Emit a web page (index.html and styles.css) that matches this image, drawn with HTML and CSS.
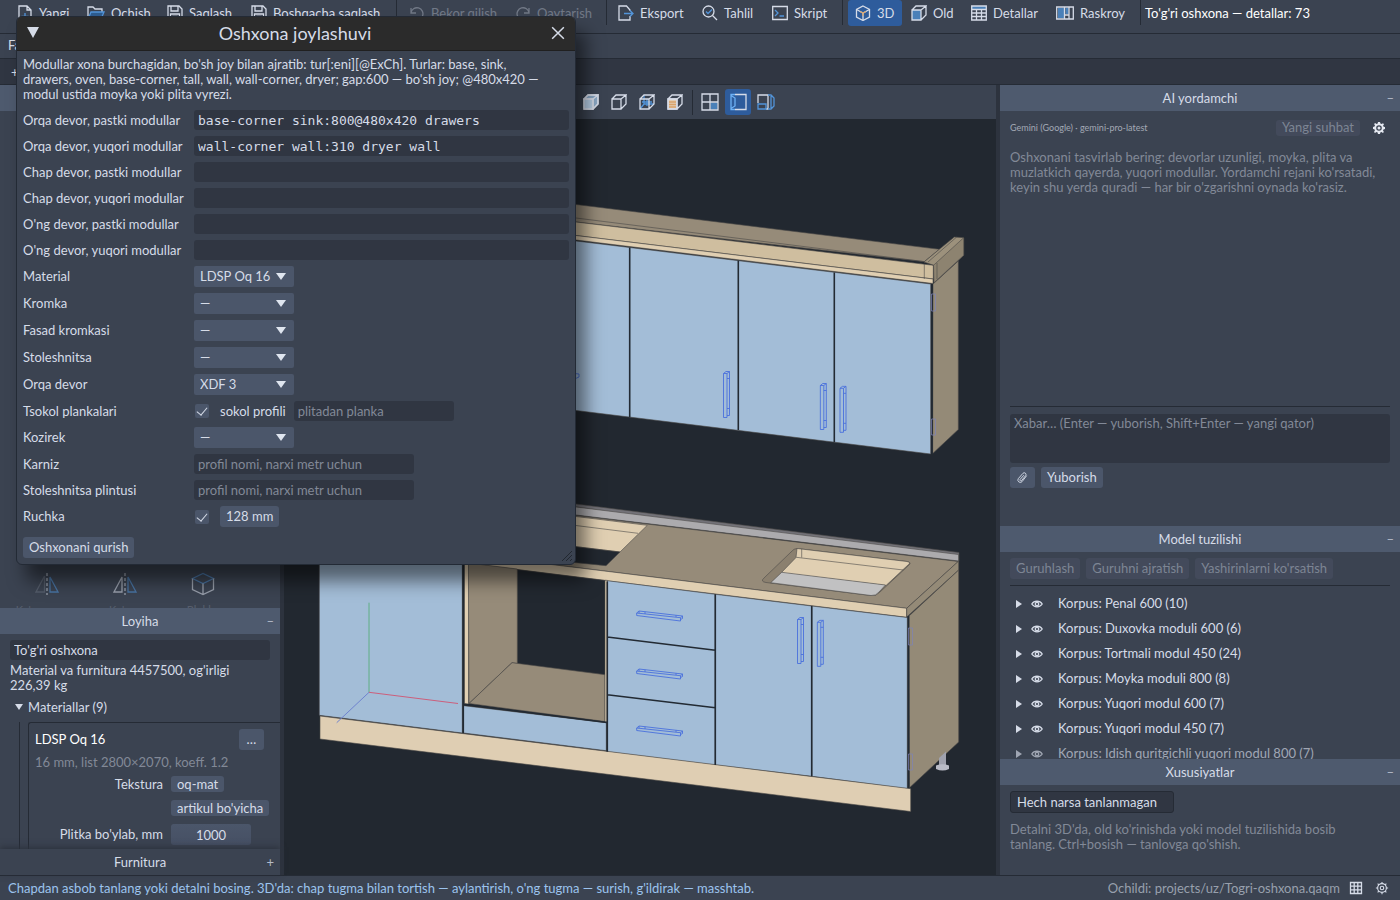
FILE: index.html
```html
<!DOCTYPE html>
<html lang="uz">
<head>
<meta charset="utf-8">
<title>To'g'ri oshxona</title>
<link rel="stylesheet" href="styles.css">
</head>
<body>
<svg class="defs" width="0" height="0" aria-hidden="true">
  <defs>
    <symbol id="i-save" viewBox="0 0 16 16"><path d="M1 1h11l3 3v11H1zM4 1v5h7V1M3.500 15V9h9v6M5.500 11.500h5"/></symbol>
    <symbol id="i-gear" viewBox="0 0 16 16"><circle cx="8" cy="8" r="5"/><circle cx="8" cy="8" r="2"/><path d="M8 1v2M8 13v2M1 8h2M13 8h2M3 3l1.500 1.500M11.500 11.500L13 13M13 3l-1.500 1.500M4.500 11.500L3 13"/></symbol>
    <symbol id="i-eye" viewBox="0 0 12 10"><path d="M.8 5C3 1.300 9 1.300 11.200 5 9 8.700 3 8.700.8 5z"/><circle cx="6" cy="5" r="1.700"/></symbol>
    <symbol id="h-flat" viewBox="0 0 48 12"><path d="M.7 3V5.500L44.500 11V7.700zM.7 3L3 1 46.500 6 44.500 7.700M46.500 6V8.500L44.500 9.500M3 1V3.300M9 1.800V4M40 5.300V7"/></symbol>
    <symbol id="h-tall" viewBox="0 0 8 48"><path d="M1 3H4.500V47H1zM3.500 1H7V45H4.500M1 3L3.500 1M4.500 3L7 1M4.500 8H7M4.500 38H7"/></symbol>
  </defs>
</svg>
<div class="app">
  <header class="toolbar">
    <button class="tool"><svg class="ic" viewBox="0 0 16 16"><path d="M4 15H2V1h8l4 4v10h-2M10 1v4h4"/><path class="b" d="M8 8v7M4.500 11.500h7"/></svg>Yangi</button>
    <button class="tool"><svg class="ic wide" viewBox="0 0 18 16"><path d="M1 14V2h5l2 2h7v3"/><path class="bf" d="M4 7h13l-3 7H1z"/></svg>Ochish</button>
    <button class="tool"><svg class="ic"><use href="#i-save"/></svg>Saqlash</button>
    <button class="tool"><svg class="ic"><use href="#i-save"/></svg>Boshqacha saqlash</button>
    <i class="sep"></i>
    <button class="tool" disabled><svg class="ic" viewBox="0 0 16 16"><path d="M2 3v5h5M2 8a6 6 0 1 1 3 6"/></svg>Bekor qilish</button>
    <button class="tool" disabled><svg class="ic" viewBox="0 0 16 16"><path d="M14 3v5H9M14 8a6 6 0 1 0-3 6"/></svg>Qaytarish</button>
    <i class="sep"></i>
    <button class="tool"><svg class="ic" viewBox="0 0 16 16"><path d="M12 6V5L8.500 1H1v14h11v-4"/><path class="b" d="M6 8.500h9M12 5.500l3 3-3 3"/></svg>Eksport</button>
    <button class="tool"><svg class="ic" viewBox="0 0 16 16"><circle cx="6.500" cy="6.500" r="5.500"/><path d="M10.500 10.500L15 15"/><path class="b" d="M4 6.500l2 2 4-4"/></svg>Tahlil</button>
    <button class="tool"><svg class="ic" viewBox="0 0 16 16"><path d="M.7 1.500h14.600v13H.7z"/><path class="b" d="M3 5l3 3-3 3M7.500 11H12"/></svg>Skript</button>
    <i class="sep"></i>
    <button class="tool active"><svg class="ic" viewBox="0 0 16 16"><path d="M8 1l6.500 3.500v7.500L8 15.500 1.500 12V4.500zM8 8v7.500"/><path d="M1.500 4.500L8 8l6.500-3.500"/><path class="o" d="M5 6.500L8 8l3-1.500M8 8v3"/></svg>3D</button>
    <button class="tool"><svg class="ic" viewBox="0 0 16 16"><path class="bs" d="M1 5h9v10H1z"/><path d="M1 5h9v10H1zM1 5l4-4h10l-5 4M15 1v9l-5 5"/></svg>Old</button>
    <button class="tool"><svg class="ic" viewBox="0 0 16 16"><path class="bs" d="M1 1h14v3H1z"/><path d="M.7 1h14.600v14H.7zM.7 4.500h14.600M.7 8h14.600M.7 11.500h14.600M5.500 4v11M10.500 4v11"/></svg>Detallar</button>
    <button class="tool"><svg class="ic wide" viewBox="0 0 18 16"><path class="bs" d="M2 3h6v10H2zM9.500 3h3v6h-3z"/><path d="M.7 2h16.600v12H.7zM8.500 2v12M13 2v12M8.500 10H13"/></svg>Raskroy</button>
    <i class="sep"></i>
    <span class="doc-title">To'g'ri oshxona — detallar: 73</span>
  </header>
  <nav class="menubar"><button class="menu">Fayl</button></nav>
  <div class="tabs"><button class="menu" aria-label="Yangi varaq">+</button></div>

  <main class="work">
    <aside class="side left">
      <div class="head"></div>
      <div class="palette">
        <div class="tiles">
          <button class="tile"><svg viewBox="0 0 24 24"><path class="dim" d="M9.500 4v16H1z"/><path class="dash" d="M12 1v22"/><path class="b" d="M15 5v15h8z"/></svg><span>Ko'zgu nusxa</span></button>
          <button class="tile"><svg viewBox="0 0 24 24"><path d="M9 5v15H1z"/><path class="dash" d="M12 1v22"/><path class="b" d="M15 5v15h8z"/></svg><span>Ko'zgu</span></button>
          <button class="tile"><svg viewBox="0 0 24 24"><path class="b" d="M1.500 6.500L12 1.500l10.500 5L12 11.500z"/><path d="M1.500 6.500v11l10.500 5 10.500-5v-11M12 11.500v11"/></svg><span>Blokka</span></button>
        </div>
      </div>
      <div class="head">Loyiha<button class="fold" aria-label="Yig'ish">–</button></div>
      <div class="project">
        <input class="field" aria-label="Loyiha nomi" value="To'g'ri oshxona">
        <p>Material va furnitura 4457500, og'irligi 226,39 kg</p>
        <button class="expander"><i class="tri-down"></i>Materiallar (9)</button>
        <div class="nest">
          <section class="card">
            <div class="card-top"><strong>LDSP Oq 16</strong><button class="btn">…</button></div>
            <div class="muted">16 mm, list 2800×2070, koeff. 1.2</div>
            <div class="props">
              <span>Tekstura</span><button class="btn small">oq-mat</button>
              <span></span><button class="btn small">artikul bo'yicha</button>
              <label for="tile-len">Plitka bo'ylab, mm</label><input id="tile-len" class="num" value="1000">
            </div>
          </section>
        </div>
      </div>
      <div class="head closed">Furnitura<button class="fold" aria-label="Ochish">+</button></div>
    </aside>

    <section class="view">
      <div class="viewbar">
        <button class="vb" aria-label="Bo'yalgan"><svg viewBox="0 0 16 16"><path class="fill-soft" d="M1 5l4-4h10v9l-5 5H1z"/><path class="fill-light" d="M1 5h9v10H1z"/><path d="M1 5l4-4h10l-5 4zM15 1v9l-5 5V5"/></svg></button>
        <button class="vb" aria-label="Chiziqli"><svg viewBox="0 0 16 16"><path d="M1 5h9v10H1zM1 5l4-4h10l-5 4M15 1v9l-5 5"/></svg></button>
        <button class="vb" aria-label="Karkas"><svg viewBox="0 0 16 16"><path class="b" d="M5 1v9h10M5 10l-4 5M8 5v7M3 8h10"/><path d="M1 5h9v10H1zM1 5l4-4h10l-5 4M15 1v9l-5 5"/></svg></button>
        <button class="vb" aria-label="Tekstura"><svg viewBox="0 0 16 16"><path class="fill-tan" d="M1 5h9v10H1z"/><path class="o" d="M2 8h7M2 10.500h7M2 13h7"/><path d="M1 5h9v10H1zM1 5l4-4h10l-5 4M15 1v9l-5 5"/></svg></button>
        <i class="sep"></i>
        <button class="vb" aria-label="To'rt oyna"><svg class="big" viewBox="0 0 18 18"><path class="bs" d="M9.500 9.500h7v7h-7z"/><path d="M1 1h16v16H1zM9 1v16M1 9h16"/></svg></button>
        <button class="vb active" aria-label="Chap oyna"><svg class="big" viewBox="0 0 18 18"><path d="M6 1.500h11v15H6"/><path class="bl" d="M6 1.500H2v15h4M2 2.500l4 2.500v8l-4 2.500"/></svg></button>
        <button class="vb" aria-label="O'lcham"><svg class="big" viewBox="0 0 18 18"><path d="M1 10V2h10v14H9"/><path class="b" d="M1 11h8v5H1zM11 2h3l3 3v8l-3 3h-3M14 3v12"/></svg></button>
      </div>
      <svg class="scene" viewBox="284 119 712 756" preserveAspectRatio="xMidYMid slice" role="img" aria-label="Oshxona 3D modeli">
        <g class="edge">
          <!-- wall cabinets -->
          <path fill="#968b79" d="M480 192L576 204.500 939.300 249.300 924 262 936 263 576 222 480 211z"/>
          <path fill="none" d="M480 206L576 218 925 261.700"/>
          <path fill="#cfbe9f" d="M480 211L576 222 933.300 265.300V279L576 235.500 480 224z"/>
          <path fill="#e0cfb2" d="M480 224L576 235.500 933 279V283.500L576 240 480 229z"/>
          <path fill="#948a77" d="M933 284L958.300 261V429.500L932.700 453.500z"/>
          <path fill="#9c917c" d="M939.300 249.300L954.300 237 963.700 237.700V255.300L934 282.700V265.300L924 262z"/>
          <path fill="#8d8370" d="M933.500 265.300L963.700 237.700V255.300L934 282.700z"/>
          <path fill="none" d="M956.700 237L928 262M924.300 264V279M937 263V279"/>
          <path fill="#a3bdd7" d="M480 229L576 241 930.700 284V454L576 410.500 480 399z"/>
        </g>
        <path class="gap" d="M629.700 247.500V417M738.300 260.500V430M834.300 272.500V442.300M932 284V454"/>
        <!-- worktop and splash strip -->
        <g class="edge">
          <path fill="#737278" d="M480 492L576 504 959 552.500V561L576 507z"/>
          <path fill="#acabae" d="M480 495L576 507 958.500 554.500V561L576 515 480 503z"/>
          <path fill="#968b79" d="M440 498L576 515.500 958.300 561.500 906.700 608.300 576 567.500 440 551z"/>
          <path fill="#e0cfb2" d="M440 551L576 567.500 906.700 608.300V617.300L576 577 440 560z"/>
          <path fill="#948a77" d="M906.700 608.300L958.700 561V570L906.700 617z"/>
          <path fill="#948a77" d="M909 616L958.700 570V742L909.500 787.700z"/>
          <path fill="#e0cfb2" d="M500 508L576 516.500 647.300 525.300 620 552 576 546.700 500 537z"/>
          <path fill="none" d="M540 521L638 533.300"/>
          <path fill="#222830" d="M500 537L576 546.700 620 552 606 565.700 576 562.700 500 553z"/>
          <path fill="#8b806f" d="M797 548.500L907 561.500Q912 562.500 909 565L880 592Q876 596.500 871 595.500L766 582.500Q760 581.500 764 578L791 552Q794 548.300 797 548.500z"/>
          <path fill="#e0cfb2" d="M797 548.500L907 561.500Q911 562.500 908.500 564.500L886 585.500 781 573 796 557.500z"/>
          <path fill="#c1c1c2" d="M781.700 572.300L885.500 585 879 592Q876 596 871 595.500L770.700 582.700z"/>
          <path fill="none" d="M796.300 557.300L903.300 570M801.700 549V557.500"/>
          <!-- tall unit, oven niche -->
          <path fill="#a3bdd7" d="M319.300 540H462.300V733L319.300 715.300z"/>
          <path fill="#222830" d="M517 569.500L606 580.500V675L517 664z"/>
          <path fill="#968b79" d="M468.300 563L517.300 569V663.500L512 662.700 469 703.500z"/>
          <path fill="#968b79" d="M512 662.700L605 674.700V721.500L469 703.500z"/>
          <path fill="#e0cfb2" d="M464.500 562.500L468.500 563V704L464.500 703.500zM605 580.300H607.300V722H605z"/>
          <path fill="#a3bdd7" d="M463.700 705.700L606.300 722.700V750.700L463.700 733z"/>
          <!-- base fronts -->
          <path fill="#a3bdd7" d="M607.300 580.700L715.300 594.300V765L607.300 751.700zM715.300 594.300L811.700 606V776.300L715.300 765zM811.700 606L907.300 617.500V788.700L811.700 776.300z"/>
          <path fill="#dfceb3" d="M320 716L910.700 788.700V811.500L320 739z"/>
        </g>
        <path class="gap" d="M607.300 581.500V751.700M715.300 594.300V765M811.700 606V776.300M908.500 616V788M463.200 562V733M607.300 637L715.300 650.300M607.300 694.700L715.300 707.700M464 704.500L607 722.500"/>
        <path fill="#a0a2ae" d="M939 758L946 751.500V765H939z"/>
        <path fill="#b9bbc6" d="M936 765.500Q942.500 763 949 765.500V769Q942.500 772 936 769z"/>
        <g class="grip">
          <use href="#h-flat" x="636" y="610" width="48" height="12"/><use href="#h-flat" x="636" y="668" width="48" height="12"/><use href="#h-flat" x="636" y="725" width="48" height="12"/>
          <use href="#h-tall" x="722.500" y="370.500" width="8" height="48"/><use href="#h-tall" x="819.300" y="382.500" width="8" height="48"/><use href="#h-tall" x="839" y="385.300" width="8" height="48"/>
          <use href="#h-tall" x="796.500" y="616.500" width="8" height="48"/><use href="#h-tall" x="816.300" y="619.300" width="8" height="48"/>
          <path d="M570 373L579 374V377L570 381"/>
        </g>
        <path class="hinge" d="M931.500 294H935.500V311H931.500zM931.500 419H935.500V435H931.500zM908.500 628H912.500V645H908.500zM908.500 754H912.500V770H908.500z"/>
        <path stroke="#5fae84" d="M369 602.700V692.300"/><path stroke="#cc5f7c" d="M369 692.300L458 703.500"/><path stroke="#6f83cf" d="M369 692.300L336.700 722.700"/>
      </svg>
    </section>

    <aside class="side right">
      <div class="head">AI yordamchi<button class="fold" aria-label="Yig'ish">–</button></div>
      <div class="chat">
        <div class="chat-top"><small>Gemini (Google) · gemini-pro-latest</small><button class="btn small off" disabled>Yangi suhbat</button><button class="plain" aria-label="Sozlamalar"><svg class="gear-solid" viewBox="0 0 14 14"><path fill-rule="evenodd" d="M6 1h2l.4 1.600 1.200.5L11 2.200 12 3.200l-.9 1.400.5 1.200L13 6v2l-1.500.4-.5 1.200.9 1.400-1 1-1.400-.9-1.200.5L8 13H6l-.4-1.500-1.200-.5-1.400.9-1-1 .9-1.400-.5-1.200L1 8V6l1.500-.4.5-1.200-.9-1.400 1-1 1.400.9 1.200-.5zM7 4.200a2.800 2.800 0 1 0 0 5.600 2.800 2.800 0 0 0 0-5.600z"/><circle cx="7" cy="7" r="1.500"/></svg></button></div>
        <p class="muted">Oshxonani tasvirlab bering: devorlar uzunligi, moyka, plita va muzlatkich qayerda, yuqori modullar. Yordamchi rejani ko'rsatadi, keyin shu yerda quradi — har bir o'zgarishni oynada ko'rasiz.</p>
        <div class="compose">
          <textarea class="field" aria-label="Xabar" placeholder="Xabar… (Enter — yuborish, Shift+Enter — yangi qator)"></textarea>
          <div class="row"><button class="btn" aria-label="Fayl biriktirish"><svg class="clip" viewBox="0 0 14 14"><path d="M11.500 5L6.500 11.500a2.600 2.600 0 0 1-4-3.300L7.500 2.500a1.900 1.900 0 0 1 3 2.300L6 10.300a1 1 0 0 1-1.600-1.200L8.500 4.500"/></svg></button><button class="btn">Yuborish</button></div>
        </div>
      </div>
      <div class="head">Model tuzilishi<button class="fold" aria-label="Yig'ish">–</button></div>
      <div class="model">
        <div class="row model-actions"><button class="btn off" disabled>Guruhlash</button><button class="btn off" disabled>Guruhni ajratish</button><button class="btn off" disabled>Yashirinlarni ko'rsatish</button></div>
        <ul class="tree">
          <li><i class="tri"></i><svg><use href="#i-eye"/></svg>Korpus: Penal 600 (10)</li>
          <li><i class="tri"></i><svg><use href="#i-eye"/></svg>Korpus: Duxovka moduli 600 (6)</li>
          <li><i class="tri"></i><svg><use href="#i-eye"/></svg>Korpus: Tortmali modul 450 (24)</li>
          <li><i class="tri"></i><svg><use href="#i-eye"/></svg>Korpus: Moyka moduli 800 (8)</li>
          <li><i class="tri"></i><svg><use href="#i-eye"/></svg>Korpus: Yuqori modul 600 (7)</li>
          <li><i class="tri"></i><svg><use href="#i-eye"/></svg>Korpus: Yuqori modul 450 (7)</li>
          <li class="faded"><i class="tri"></i><svg><use href="#i-eye"/></svg>Korpus: Idish quritgichli yuqori modul 800 (7)</li>
        </ul>
      </div>
      <div class="head">Xususiyatlar<button class="fold" aria-label="Yig'ish">–</button></div>
      <div class="details">
        <div class="chip">Hech narsa tanlanmagan</div>
        <p class="muted">Detalni 3D'da, old ko'rinishda yoki model tuzilishida bosib tanlang. Ctrl+bosish — tanlovga qo'shish.</p>
      </div>
    </aside>
  </main>

  <footer class="status">
    <span class="hint">Chapdan asbob tanlang yoki detalni bosing. 3D'da: chap tugma bilan tortish — aylantirish, o'ng tugma — surish, g'ildirak — masshtab.</span>
    <span class="path">Ochildi: projects/uz/Togri-oshxona.qaqm</span>
    <button class="plain" aria-label="To'r"><svg viewBox="0 0 14 14"><path d="M1.500 1.500h11v11h-11zM5.200 1.500v11M8.800 1.500v11M1.500 5.200h11M1.500 8.800h11"/></svg></button>
    <button class="plain" aria-label="Sozlamalar"><svg><use href="#i-gear"/></svg></button>
  </footer>
</div>

<form class="dialog" role="dialog" aria-labelledby="dlg-title">
  <div class="dialog-head">
    <button type="button" class="plain" aria-label="Yig'ish"><i class="tri-down big"></i></button>
    <h1 id="dlg-title">Oshxona joylashuvi</h1>
    <button type="button" class="plain" aria-label="Yopish"><svg viewBox="0 0 12 12"><path d="M1 1l10 10M11 1L1 11"/></svg></button>
  </div>
  <div class="dialog-body">
    <p>Modullar xona burchagidan, bo'sh joy bilan ajratib: tur[:eni][@ExCh]. Turlar: base, sink, drawers, oven, base-corner, tall, wall, wall-corner, dryer; gap:600 — bo'sh joy; @480x420 — modul ustida moyka yoki plita vyrezi.</p>
    <div class="form">
      <label for="f1">Orqa devor, pastki modullar</label><input id="f1" class="field mono" value="base-corner sink:800@480x420 drawers">
      <label for="f2">Orqa devor, yuqori modullar</label><input id="f2" class="field mono" value="wall-corner wall:310 dryer wall">
      <label for="f3">Chap devor, pastki modullar</label><input id="f3" class="field mono">
      <label for="f4">Chap devor, yuqori modullar</label><input id="f4" class="field mono">
      <label for="f5">O'ng devor, pastki modullar</label><input id="f5" class="field mono">
      <label for="f6">O'ng devor, yuqori modullar</label><input id="f6" class="field mono">
      <label for="s1">Material</label><span class="combo"><select id="s1"><option>LDSP Oq 16</option></select></span>
      <label for="s2">Kromka</label><span class="combo"><select id="s2"><option>—</option></select></span>
      <label for="s3">Fasad kromkasi</label><span class="combo"><select id="s3"><option>—</option></select></span>
      <label for="s4">Stoleshnitsa</label><span class="combo"><select id="s4"><option>—</option></select></span>
      <label for="s5">Orqa devor</label><span class="combo"><select id="s5"><option>XDF 3</option></select></span>
      <span>Tsokol plankalari</span><span class="row plinth"><label class="check"><input type="checkbox" checked>sokol profili</label><input class="field plank" aria-label="Tsokol plankasi" placeholder="plitadan planka"></span>
      <label for="s6">Kozirek</label><span class="combo"><select id="s6"><option>—</option></select></span>
      <label for="f7">Karniz</label><input id="f7" class="field mid" placeholder="profil nomi, narxi metr uchun">
      <label for="f8">Stoleshnitsa plintusi</label><input id="f8" class="field mid" placeholder="profil nomi, narxi metr uchun">
      <label for="c2">Ruchka</label><span class="row handle"><input id="c2" type="checkbox" checked><button type="button" class="btn">128 mm</button></span>
    </div>
    <button type="button" class="btn">Oshxonani qurish</button>
  </div>
  <svg class="grab" viewBox="0 0 12 12"><path d="M1 11L11 1M5 11l6-6M9 11l2-2"/></svg>
</form>
</body>
</html>
```
FILE: styles.css
```css
* { box-sizing: border-box; }
:root {
  --panel: #3b4351;
  --line: #252b35;
  --input: #303642;
  --btn: #4b566a;
  --text: #d6dce8;
  --muted: #828997;
  --blue: #5294d9;
}
body {
  margin: 0;
  overflow: hidden;
  background: #222830;
  color: var(--text);
  font: 13px/15px Lato, "Noto Sans", sans-serif;
}
button, input, select, textarea { font: inherit; color: inherit; border: 0; margin: 0; padding: 0; background: none; }
p, ul, h1 { margin: 0; padding: 0; font-weight: 400; }
svg { display: block; fill: none; stroke: #d6dce8; stroke-width: 1.3; flex: none; }
.defs { position: absolute; }
i { display: block; }

.app { display: flex; flex-direction: column; height: 100vh; }
.toolbar {
  display: grid;
  grid-template-columns: 70px 80px 84px 145px 13px 106px 91px 12px 84px 70px 70px 6px 63px 60px 85px 84px 5px 1fr;
  height: 34px;
  padding-left: 17px;
  background: var(--panel);
  border-bottom: 1px solid var(--line);
}
.tool { display: flex; align-items: center; gap: 6px; height: 26px; white-space: nowrap; }
.tool:disabled { opacity: .35; }
.tool.active { width: 54px; padding-left: 7px; border-radius: 3px; background: #2e5c9c; }
.ic { width: 16px; height: 16px; }
.ic.wide { width: 18px; }
.sep { width: 1px; height: 25px; background: var(--line); }
.doc-title { line-height: 26px; color: #fff; white-space: nowrap; }
.b { stroke: var(--blue); }
.bl { stroke: #6db1f5; }
.bf { stroke: var(--blue); fill: #2e5c8f; }
.bs { stroke: none; fill: #4a80b8; }
.o { stroke: #d9a36a; }
.fill-soft { fill: #8aa7c4; }
.fill-light { fill: #b4cbe2; }
.fill-tan { fill: #e2cdb4; }
.menubar { height: 25px; padding: 4px 8px; background: var(--panel); border-bottom: 1px solid var(--line); }
.tabs { height: 26px; padding: 6px 11px; background: #303642; border-bottom: 1px solid var(--line); }

.work { flex: 1; min-height: 0; display: grid; grid-template-columns: 280px 1fr 400px; gap: 4px; background: #2d333e; }
.side { display: flex; flex-direction: column; min-height: 0; background: var(--panel); }
.head {
  position: relative;
  flex: none;
  height: 26px;
  line-height: 26px;
  text-align: center;
  background: #4e5a6e;
}
.head.closed { background: var(--panel); box-shadow: 0 -2px 6px #2d333e; }
.fold { position: absolute; right: 6px; top: 0; line-height: 26px; color: #b4bbc8; }
.palette { flex: 1; min-height: 0; overflow: hidden; display: flex; align-items: flex-end; padding-left: 8px; }
.tiles { display: grid; grid-template-columns: repeat(3, 78px); margin-bottom: -9px; opacity: .6; }
.tile { display: flex; flex-direction: column; align-items: center; gap: 6px; font-size: 11px; white-space: nowrap; }
.tile svg { width: 24px; height: 24px; }
.tile span { opacity: .3; }
.dim { stroke: #666e7c; }
.dash { stroke-dasharray: 3 2; }

.project { flex: 0 0 215px; overflow: hidden; padding: 6px 0 0 10px; }
.field { display: block; width: 100%; height: 20px; padding: 0 4px; border-radius: 3px; background: var(--input); resize: none; }
.field::placeholder { color: var(--muted); opacity: 1; }
.project .field { width: 260px; }
.project p { margin: 3px 30px 6px 0; }
.expander { display: flex; align-items: center; gap: 5px; padding-left: 5px; line-height: 16px; }
.tri-down { border: 4px solid transparent; border-top: 6px solid var(--text); border-bottom: 0; }
.tri-down.big { border-width: 11px 6px 0; }
.nest { margin: 7px 0 0 9px; padding-left: 8px; border-left: 1px solid var(--line); }
.card { height: 140px; padding: 6px 10px 0 6px; border: 1px solid var(--line); border-right: 0; border-radius: 3px 0 0; }
.card-top { display: flex; justify-content: space-between; align-items: center; padding-right: 6px; }
.card-top strong { font-weight: 400; color: #fff; }
.card-top .btn { width: 25px; }
.muted { color: var(--muted); }
.card .muted { margin: 5px 0 6px; }
.props { display: grid; grid-template-columns: 128px auto; justify-items: start; align-items: center; gap: 8px; }
.props > :nth-child(odd) { justify-self: end; }
.num { width: 80px; height: 21px; text-align: center; border-radius: 3px; background: linear-gradient(#4b566a, #465064); }
.btn { height: 21px; padding: 0 6px; border-radius: 3px; background: var(--btn); white-space: nowrap; }
.btn.small { height: 16px; line-height: 15px; }
.btn.off { background: #434a5b; color: #7d8594; }

.view { display: flex; flex-direction: column; min-width: 0; min-height: 0; background: #222830; }
.viewbar { display: flex; align-items: center; gap: 2px; height: 34px; padding-left: 294px; background: var(--panel); }
.vb { width: 26px; height: 26px; display: grid; place-items: center; border-radius: 3px; }
.vb.active { background: #2e5c9c; }
.vb svg { width: 16px; height: 16px; }
.vb .big { width: 18px; height: 18px; }
.viewbar .sep { margin: 0 2px; }
.scene { flex: 1; width: 100%; min-height: 0; stroke: none; stroke-width: 1; }
.edge { stroke: #4b4a48; stroke-width: .6; }
.gap { stroke: #222a33; stroke-width: 1.6; }
.grip { stroke: #4a70dc; stroke-width: .9; }
.hinge { stroke: #7d82b8; stroke-width: .7; }

.chat { flex: 1; min-height: 0; display: flex; flex-direction: column; padding: 8px 10px 38px; }
.chat-top { display: flex; align-items: center; gap: 12px; height: 17px; margin-bottom: 14px; }
.chat-top small { flex: 1; font-size: 9px; color: #a3a9b5; }
.plain { display: grid; place-items: center; }
.plain svg { width: 14px; height: 14px; }
.chat-top .plain { margin-right: 4px; }
.plain .gear-solid { fill: #e4e8f0; stroke: none; }
.compose { margin-top: auto; padding-top: 7px; border-top: 1px solid var(--line); }
.compose textarea { height: 49px; padding: 2px 4px; margin-bottom: 4px; }
.row { display: flex; align-items: center; gap: 6px; }
.clip { width: 13px; height: 13px; stroke-width: 1; }
.model { flex: 0 0 207px; overflow: hidden; padding: 6px 10px 0; }
.model-actions { padding-bottom: 6px; margin-bottom: 5px; border-bottom: 1px solid var(--line); }
.tree { list-style: none; }
.tree li { display: flex; align-items: center; height: 25px; padding-left: 6px; white-space: nowrap; }
.tree svg { width: 12px; height: 10px; margin: 0 15px 0 9px; }
.tri { border: 4px solid transparent; border-left: 6px solid var(--text); border-right: 0; }
.faded { opacity: .65; }
.details { flex: 0 0 90px; padding: 6px 10px; }
.chip { width: 164px; height: 22px; padding: 0 6px; line-height: 20px; border: 1px solid var(--line); border-radius: 3px; background: var(--input); }
.details p { margin-top: 9px; padding-right: 20px; }

.status { display: flex; align-items: center; gap: 12px; height: 25px; padding: 0 11px 0 8px; background: var(--panel); border-top: 1px solid var(--line); }
.hint { flex: 1; color: #9cc3ee; white-space: nowrap; }
.path { color: #98a0ad; margin-right: -3px; }

.dialog {
  position: absolute;
  left: 16px;
  top: 16px;
  width: 560px;
  border: 1px solid #232a35;
  border-radius: 6px;
  background: var(--panel);
  box-shadow: 10px 16px 18px rgba(0, 0, 0, .5);
}
.dialog-head { display: flex; align-items: center; height: 34px; padding: 0 10px 2px; border-radius: 5px 5px 0 0; background: #2b2b2b; border-bottom: 1px solid #202020; }
.dialog-head h1 { flex: 1; text-align: center; font-size: 18px; line-height: 24px; }
.dialog-body { padding: 6px; }
.dialog-body p { padding-right: 18px; }
.form { display: grid; grid-template-columns: 165px 1fr; gap: 6px; align-items: center; margin: 8px 0 10px; }
.mono { font-family: "DejaVu Sans Mono", monospace; }
.mid { width: 220px; }
.plank { width: 160px; }
.combo { position: relative; width: 100px; }
.combo select { display: block; appearance: none; width: 100%; height: 21px; padding-left: 6px; border-radius: 2px; background: var(--btn); }
.combo::after { content: ""; position: absolute; right: 8px; top: 7px; border: 5px solid transparent; border-top: 7px solid #dfe5ef; border-bottom: 0; pointer-events: none; }
.check { display: flex; align-items: center; gap: 11px; }
.plinth { gap: 8px; }
input[type="checkbox"] {
  appearance: none;
  display: grid;
  place-items: center;
  width: 14px;
  height: 14px;
  margin-left: 1px;
  border-radius: 2px;
  background: var(--btn);
}
input[type="checkbox"]:checked::after { content: ""; width: 5px; height: 9px; margin-bottom: 2px; border: solid var(--text); border-width: 0 1px 1px 0; transform: rotate(40deg); }
.handle { gap: 11px; }
.grab { position: absolute; right: 2px; bottom: 2px; width: 12px; height: 12px; stroke: #222830; stroke-width: 1; }
```
